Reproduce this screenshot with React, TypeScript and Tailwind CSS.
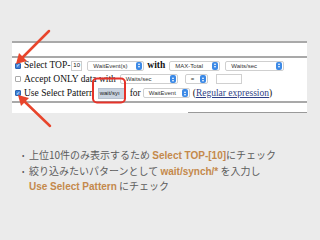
import React from "react";

const Select = ({ label, w }: { label: string; w: string }) => (
  <div className={`${w} h-[10px] flex items-center justify-between rounded-[2px] border border-[#cfcfcf] bg-white pl-[5px] pr-[1px]`}>
    <span className="text-[6px] leading-none text-[#333] font-['Liberation_Sans',sans-serif]">{label}</span>
    <span className="w-[6px] h-[8px] rounded-[2px] bg-[#3d8ae6] flex flex-col items-center justify-center gap-[1px]">
      <span className="w-0 h-0 border-l-[1.5px] border-r-[1.5px] border-b-[2px] border-l-transparent border-r-transparent border-b-white" />
      <span className="w-0 h-0 border-l-[1.5px] border-r-[1.5px] border-t-[2px] border-l-transparent border-r-transparent border-t-white" />
    </span>
  </div>
);

const Check = ({ on }: { on?: boolean }) => (
  <span className={`w-[6px] h-[6px] rounded-[1px] border ${on ? "bg-[#3d7fd9] border-[#2d64b0]" : "bg-white border-[#aaa]"} flex items-center justify-center`}>
    {on && <span className="text-[5px] leading-none text-white">✓</span>}
  </span>
);

export default function App() {
  return (
    <div className="relative w-[320px] h-[240px] overflow-hidden bg-[#ebebeb] font-['Liberation_Serif',serif]">
      <div className="pt-[41px] pl-[12px]">
        <div className="w-[295px] bg-white">
          <div className="h-[2px] bg-[#a9a9a9]" />
          <div className="h-[13px]" />
          <div className="h-[2px] bg-[#a9a9a9]" />
          <div className="pl-[3px] pt-[1px] flex flex-col text-[9.5px] text-[#111]">
            <div className="h-[13px] flex items-center">
              <Check on />
              <span className="ml-[3px]">Select TOP-</span>
              <span className="ml-[1px] w-[11px] h-[10px] border border-[#ccc] text-[6px] flex items-center pl-[1px] font-['Liberation_Sans',sans-serif]">10</span>
              <span className="ml-[5px]"><Select label="WaitEvent(s)" w="w-[57px]" /></span>
              <span className="ml-[3px] font-bold">with</span>
              <span className="ml-[4px]"><Select label="MAX-Total" w="w-[51px]" /></span>
              <span className="ml-[5px]"><Select label="Waits/sec" w="w-[59px]" /></span>
            </div>
            <div className="h-[14px] flex items-center">
              <Check />
              <span className="ml-[3px]">Accept ONLY data with</span>
              <span className="ml-[4px]"><Select label="Waits/sec" w="w-[58px]" /></span>
              <span className="ml-[7px]"><Select label="=" w="w-[23px]" /></span>
              <span className="ml-[8px] w-[26px] h-[10px] border border-[#d0d0d0] bg-white" />
            </div>
            <div className="h-[14px] flex items-center">
              <Check on />
              <span className="ml-[3px]">Use Select Pattern</span>
              <span className="ml-[4px] w-[27px] h-[11px] bg-[#c8d2df] border border-[#b8c2cf] text-[6px] flex items-center pl-[1px] font-['Liberation_Sans',sans-serif] text-[#222]">wait/syı</span>
              <span className="ml-[5px]">for</span>
              <span className="ml-[2px]"><Select label="WaitEvent" w="w-[47px]" /></span>
              <span className="ml-[3px]">(<span className="underline text-[#2e3f86]">Regular expression</span>)</span>
            </div>
          </div>
          <div className="mt-[1px] h-[2px] bg-[#a9a9a9]" />
          <div className="h-[10px] flex justify-end items-end">
            <div className="w-[119px] h-[1px] bg-[#999]" />
          </div>
        </div>
      </div>

      <div className="mt-[35px] pl-[22px] flex flex-col text-[10px] leading-[14.5px] text-[#5c5c5c] font-['Noto_Sans_CJK_JP',sans-serif]">
        <div className="flex">
          <span className="w-[7px] text-[7px]">•</span>
          <span>上位10件のみ表示するため <b className="text-[#c4894c] font-['Liberation_Sans',sans-serif]">Select TOP-[10]</b>にチェック</span>
        </div>
        <div className="flex">
          <span className="w-[7px] text-[7px]">•</span>
          <span>絞り込みたいパターンとして <b className="text-[#c4894c] font-['Liberation_Sans',sans-serif]">wait/synch/*</b> を入力し<br /><b className="text-[#c4894c] font-['Liberation_Sans',sans-serif]">Use Select Pattern</b> にチェック</span>
        </div>
      </div>

      <svg className="absolute left-0 top-0" width="320" height="240">
        <rect x="93" y="78.5" width="32" height="24" rx="4" fill="none" stroke="#e5332a" strokeWidth="2" />
        <line x1="49" y1="31" x2="22" y2="58" stroke="#e8452c" strokeWidth="2.5" strokeLinecap="round" />
        <polygon points="16,64 19,53 27,61" fill="#e8452c" />
        <line x1="50" y1="126" x2="24" y2="101" stroke="#e8452c" strokeWidth="2.5" strokeLinecap="round" />
        <polygon points="18,95 29,98 21,106" fill="#e8452c" />
      </svg>
    </div>
  );
}
